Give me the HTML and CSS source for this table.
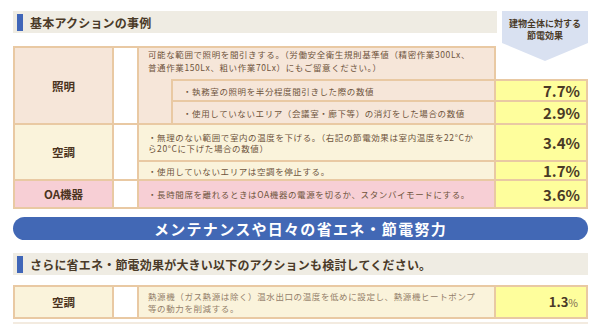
FILE: index.html
```html
<!DOCTYPE html>
<html lang="ja">
<head>
<meta charset="utf-8">
<title>節電アクション</title>
<link rel="stylesheet" href="styles.css">
</head>
<body>
<div class="page">
  <div class="sec-title narrow"><span class="mark"></span>基本アクションの事例</div>
  <div class="effect-head">建物全体に対する<br>節電効果</div>

  <table class="acts first">
    <colgroup>
      <col class="c-lbl"><col class="c-blank"><col class="c-ind"><col class="c-txt"><col class="c-pct">
    </colgroup>
    <tr class="h33">
      <td rowspan="3" class="lbl peach top">照明</td>
      <td rowspan="3" class="blank top"></td>
      <td colspan="2" class="desc peach top nob">可能な範囲で照明を間引きする。（労働安全衛生規則基準値（精密作業300Lx、<br>普通作業150Lx、粗い作業70Lx）にもご留意ください。）</td>
      <td class="void"></td>
    </tr>
    <tr class="h23">
      <td rowspan="2" class="indent peach"></td>
      <td class="sub peach top">・執務室の照明を半分程度間引きした際の数値</td>
      <td class="pct top">7.7%</td>
    </tr>
    <tr class="h23">
      <td class="sub peach">・使用していないエリア（会議室・廊下等）の消灯をした場合の数値</td>
      <td class="pct">2.9%</td>
    </tr>
    <tr class="h37">
      <td rowspan="2" class="lbl cream">空調</td>
      <td rowspan="2" class="blank"></td>
      <td colspan="2" class="cream lh11">・無理のない範囲で室内の温度を下げる。（右記の節電効果は室内温度を22°Cか<br>ら20°Cに下げた場合の数値）</td>
      <td class="pct">3.4%</td>
    </tr>
    <tr class="h19">
      <td colspan="2" class="cream">・使用していないエリアは空調を停止する。</td>
      <td class="pct">1.7%</td>
    </tr>
    <tr class="h28">
      <td class="lbl pink">OA機器</td>
      <td class="blank"></td>
      <td colspan="2" class="pink">・長時間席を離れるときはOA機器の電源を切るか、スタンバイモードにする。</td>
      <td class="pct">3.6%</td>
    </tr>
  </table>

  <div class="pill">メンテナンスや日々の省エネ・節電努力</div>

  <div class="sec-title second"><span class="mark"></span>さらに省エネ・節電効果が大きい以下のアクションも検討してください。</div>

  <table class="acts more">
    <colgroup>
      <col class="c-lbl"><col class="c-blank"><col class="c-ind"><col class="c-txt"><col class="c-pct">
    </colgroup>
    <tr class="h34">
      <td class="lbl cream top">空調</td>
      <td class="blank top"></td>
      <td colspan="2" class="cream top light lh12">熱源機（ガス熱源は除く）温水出口の温度を低めに設定し、熱源機ヒートポンプ<br>等の動力を削減する。</td>
      <td class="pct top small">1.3<span class="unit">%</span></td>
    </tr>
  </table>
  <div class="next-row"></div>
</div>
</body>
</html>
```

FILE: styles.css
```css
body {
  margin: 0;
  background: #ffffff;
  font-family: "Noto Sans CJK JP", "Noto Sans", sans-serif;
  color: #5a4530;
}

.page {
  position: relative;
  width: 575px;
  padding: 11px 0 0 13px;
}

.sec-title {
  height: 22px;
  background: #efece3;
  display: flex;
  align-items: center;
  font-size: 12px;
  font-weight: bold;
  color: #4a3a28;
  letter-spacing: 0.2px;
  white-space: nowrap;
}

.sec-title.narrow {
  width: 484px;
}

.sec-title.second {
  margin-top: 13px;
}

.mark {
  width: 6px;
  height: 17px;
  background: #4066b8;
  margin: 0 7px 0 4px;
  flex: none;
}

.effect-head {
  position: absolute;
  top: 11px;
  left: 502px;
  z-index: 2;
  width: 86px;
  height: 50px;
  box-sizing: border-box;
  padding-top: 7px;
  background: #d9e1f1;
  clip-path: polygon(0 0, 100% 0, 100% 64%, 50% 100%, 0 64%);
  font-size: 9px;
  font-weight: bold;
  line-height: 11.5px;
  text-align: center;
  color: #4a3a28;
}

.acts {
  border-collapse: separate;
  border-spacing: 0;
  table-layout: fixed;
  width: 575px;
}

.acts.first {
  margin-top: 13px;
}

.acts.more {
  margin-top: 10px;
}

.c-lbl { width: 101px; }
.c-blank { width: 25px; }
.c-ind { width: 32px; }
.c-txt { width: 325px; }
.c-pct { width: 92px; }

.h33 { height: 33px; }
.h23 { height: 23px; }
.h37 { height: 37px; }
.h19 { height: 19px; }
.h28 { height: 28px; }
.h34 { height: 34px; }

.acts td {
  border-right: 2px solid #e9c9a3;
  border-bottom: 2px solid #e9c9a3;
  padding: 0 0 0 9px;
  font-size: 8.5px;
  letter-spacing: 0.6px;
  line-height: 12px;
  color: #6e543c;
  white-space: nowrap;
  vertical-align: middle;
}

.acts td.top {
  border-top: 2px solid #e9c9a3;
}

.acts td.nob {
  border-bottom: none;
}

.acts td.lbl {
  border-left: 2px solid #e9c9a3;
  padding: 0;
  text-align: center;
  font-size: 11.5px;
  font-weight: bold;
  letter-spacing: 0;
  color: #4b3320;
}

.acts td.blank {
  padding: 0;
  background: #ffffff;
}

.acts td.desc {
  vertical-align: top;
  line-height: 12.5px;
}

.acts td.void {
  border-top: none;
  border-right: none;
  border-bottom: none;
  background-color: #ffffff;
  padding: 0;
}

.acts td.indent {
  border-right: none;
  padding: 0;
}

.acts td.sub {
  border-left: 2px solid #e9c9a3;
  padding-left: 10px;
}

.acts td.lh11 { line-height: 11px; }
.acts td.lh12 { line-height: 12px; }

.acts td.light {
  color: #94806a;
}

.peach { background: #f6e6d9; }
.cream { background: #faf3db; }
.pink { background: #f7cfd5; }

.acts td.pct {
  padding: 0 6px 0 0;
  text-align: right;
  background: #fefe9c;
  font-size: 15px;
  font-weight: bold;
  letter-spacing: 0;
  line-height: 15px;
  color: #4a3926;
}

.acts td.pct.small {
  font-size: 13px;
  padding-right: 8px;
}

.unit {
  font-size: 10.5px;
  font-weight: normal;
  color: #7a6650;
}

.pill {
  margin-top: 8px;
  height: 23px;
  border-radius: 12px;
  background: #4268b5;
  color: #ffffff;
  display: flex;
  align-items: center;
  justify-content: center;
  font-size: 15px;
  font-weight: bold;
  letter-spacing: 1.3px;
  white-space: nowrap;
}

.next-row {
  margin-top: 3px;
  height: 2px;
  background: #f3ebe0;
}
```
